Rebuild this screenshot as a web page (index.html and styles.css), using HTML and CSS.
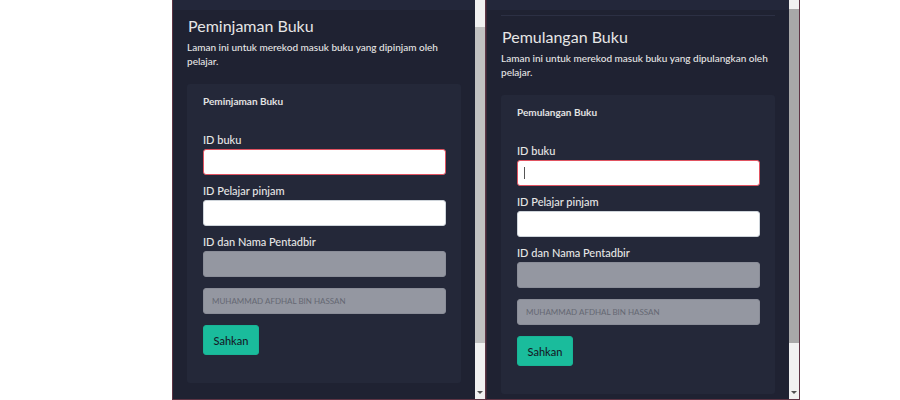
FILE: index.html
```html
<!DOCTYPE html>
<html>
<head>
<meta charset="utf-8">
<link rel="stylesheet" href="styles.css">
</head>
<body>
<div class="frames">
  <div class="frame">
    <div class="view">
      <div class="topbar"></div>
      <div class="content scrolled">
        <hr class="rule">
        <h2 class="title">Peminjaman Buku</h2>
        <p class="lead">Laman ini untuk merekod masuk buku yang dipinjam oleh pelajar.</p>
        <div class="card">
          <h3 class="card-title">Peminjaman Buku</h3>
          <label class="label">ID buku</label>
          <div class="field"><input class="input invalid" type="text"></div>
          <label class="label">ID Pelajar pinjam</label>
          <div class="field"><input class="input" type="text"></div>
          <label class="label">ID dan Nama Pentadbir</label>
          <div class="field"><input class="input disabled" type="text" disabled></div>
          <div class="field gap"><input class="input disabled" type="text" disabled placeholder="MUHAMMAD AFDHAL BIN HASSAN"></div>
          <button class="btn">Sahkan</button>
        </div>
      </div>
    </div>
    <div class="sb">
      <div class="thumb thumb-left"></div>
      <div class="sb-fill"></div>
      <div class="sb-arrow"></div>
    </div>
  </div>
  <div class="frame">
    <div class="view">
      <div class="topbar"></div>
      <div class="content">
        <hr class="rule">
        <h2 class="title">Pemulangan Buku</h2>
        <p class="lead">Laman ini untuk merekod masuk buku yang dipulangkan oleh pelajar.</p>
        <div class="card">
          <h3 class="card-title">Pemulangan Buku</h3>
          <label class="label">ID buku</label>
          <div class="field"><input class="input invalid" type="text"><span class="caret"></span></div>
          <label class="label">ID Pelajar pinjam</label>
          <div class="field"><input class="input" type="text"></div>
          <label class="label">ID dan Nama Pentadbir</label>
          <div class="field"><input class="input disabled" type="text" disabled></div>
          <div class="field gap"><input class="input disabled" type="text" disabled placeholder="MUHAMMAD AFDHAL BIN HASSAN"></div>
          <button class="btn">Sahkan</button>
        </div>
      </div>
    </div>
    <div class="sb">
      <div class="thumb thumb-right"></div>
      <div class="sb-fill"></div>
      <div class="sb-arrow"></div>
    </div>
  </div>
</div>
</body>
</html>
```
FILE: styles.css
```css
* { box-sizing: border-box; }
html, body { margin: 0; padding: 0; background: #ffffff; }
body {
  width: 900px;
  height: 400px;
  overflow: hidden;
  font-family: "Lato", "Noto Sans", sans-serif;
}
.frames {
  display: flex;
  padding-left: 172px;
}
.frame {
  width: 314px;
  height: 400px;
  display: flex;
  border: 1px solid #5e3444;
  border-top: none;
}
.frame + .frame { border-left-color: #3a2a38; }
.view {
  flex: 1;
  position: relative;
  overflow: hidden;
  background: #1f2232;
}
.topbar {
  position: absolute;
  left: 0; right: 0; top: 0;
  height: 10px;
  background: #23273a;
  z-index: 2;
}
.content {
  padding: 15px 14px 0 14px;
}
.content.scrolled {
  padding-top: 4px;
}
.rule {
  margin: 0;
  border: none;
  border-top: 1px solid #2c3044;
}
.title {
  margin: 11px 0 0 1px;
  font-size: 16px;
  line-height: 19px;
  font-weight: 400;
  color: #e6e6e6;
}
.lead {
  margin: 5px 0 0;
  font-size: 10px;
  line-height: 14px;
  font-weight: 500;
  color: #e6e6e6;
}
.card {
  margin-top: 16px;
  background: #242839;
  border-radius: 3px;
  padding: 10px 15px 28px 16px;
  display: flex;
  flex-direction: column;
  align-items: flex-start;
}
.card-title {
  margin: 0 0 25px;
  font-size: 10px;
  line-height: 14px;
  font-weight: 700;
  color: #e2e2e2;
}
.label {
  font-size: 11px;
  line-height: 14px;
  font-weight: 500;
  color: #e6e6e6;
  margin-bottom: 2px;
}
.field {
  position: relative;
  width: 100%;
  margin-bottom: 9px;
}
.field.gap { margin-top: 2px; }
.input {
  display: block;
  width: 100%;
  height: 26px;
  margin: 0;
  border: 1px solid #ced4da;
  border-radius: 3px;
  background: #ffffff;
  padding: 0 8px;
  font-family: inherit;
  font-size: 8px;
  outline: none;
}
.input.invalid { border-color: #e15361; }
.input.disabled {
  background: #9497a1;
  border-color: #8a8d98;
}
.input.disabled::placeholder {
  color: #656873;
  opacity: 1;
}
.caret {
  position: absolute;
  left: 7px;
  top: 7px;
  width: 1px;
  height: 12px;
  background: #555;
}
.btn {
  margin-top: 2px;
  width: 56px;
  height: 30px;
  border: 1px solid #18b596;
  border-radius: 3px;
  background: #1abc9c;
  color: #151b28;
  font-family: inherit;
  font-size: 11px;
  font-weight: 500;
  padding: 0;
}
.sb {
  width: 10px;
  background: #f1f1f1;
  display: flex;
  flex-direction: column;
}
.thumb { width: 100%; }
.thumb-left { margin-top: 27px; height: 316px; background: #c1c1c1; }
.thumb-right { margin-top: 9px; height: 334px; background: #a8a8a8; }
.sb-fill { flex: 1; }
.sb-arrow {
  height: 10px;
  display: flex;
  justify-content: center;
  align-items: flex-start;
}
.sb-arrow::before {
  content: "";
  width: 0; height: 0;
  border-left: 3px solid transparent;
  border-right: 3px solid transparent;
  border-top: 3px solid #505050;
  margin-top: 2px;
}
```
